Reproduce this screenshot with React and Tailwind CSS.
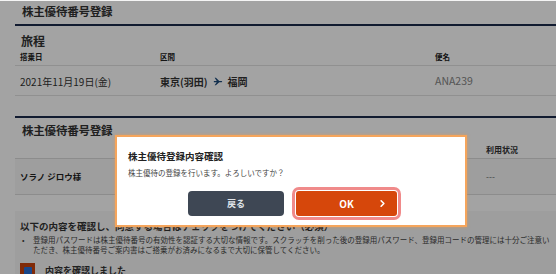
import { ChevronRight } from 'lucide-react'

const font = { fontFamily: '"Noto Sans CJK JP", "Noto Sans", sans-serif' }

const App = () => {
  return (
    <div className="w-[556px] h-[274px] overflow-hidden bg-white border-t border-[#f4f4f4]" style={font}>
      <div className="relative w-full h-full overflow-hidden bg-white text-[#333]">
        {/* page */}
        <div className="h-[23px] flex items-start pt-[3px] pl-[22px]">
          <h1 className="text-[11.5px] font-bold leading-[14px] tracking-[-0.2px]">株主優待番号登録</h1>
        </div>
        <div className="ml-[15px] h-[2px] bg-[#1c2b4c]" />

        <div className="ml-[15px]">
          <h2 className="pl-[6px] pt-[8px] text-[12px] font-bold leading-[14px]">旅程</h2>
          <div className="flex items-center h-[18px] pl-[5px] text-[7.5px] font-bold text-[#222] border-b border-[#e2e2e2]">
            <span className="w-[140px]">搭乗日</span>
            <span className="w-[275px]">区間</span>
            <span>便名</span>
          </div>
          <div className="flex items-center h-[30px] pl-[5px] pt-[1px] text-[10px] border-b border-[#e2e2e2]">
            <span className="w-[140px]">2021年11月19日(金)</span>
            <span className="w-[275px] flex items-center gap-[5px] font-bold">
              東京(羽田)
              <svg width="10" height="9" viewBox="0 0 24 20" fill="#1c4a7a">
                <path d="M2 8.5h7L4 1h3l8 7.5h5.5a1.5 1.5 0 0 1 0 3H15L7 19H4l5-7.5H2z" />
              </svg>
              福岡
            </span>
            <span className="text-[#858585] text-[10.5px]">ANA239</span>
          </div>
        </div>

        <div className="ml-[15px] mt-[20px] h-[2px] bg-[#1c2b4c]" />
        <h2 className="pl-[22px] pt-[5px] text-[11.5px] font-bold leading-[14px] tracking-[-0.2px]">株主優待番号登録</h2>

        <div className="ml-[15px] mt-[5px]">
          <div className="flex items-center justify-end h-[17px] border-b border-[#dcdcdc] text-[8px] font-bold">
            <span className="w-[70px]">利用状況</span>
          </div>
          <div className="flex items-center justify-between h-[36px] bg-[#f7f7f7] border-b border-[#dcdcdc] pl-[5px] text-[8.5px]">
            <span className="font-bold text-[#222]">ソラノ ジロウ様</span>
            <span className="w-[70px] text-[#666]">---</span>
          </div>
        </div>

        <div className="ml-[15px] mt-[16px] bg-[#f7f7f7] pt-[9px] pl-[5px]">
          <p className="text-[9.5px] font-bold leading-[12px] whitespace-nowrap">
            以下の内容を確認し、同意する場合はチェックをつけてください（必須）
          </p>
          <div className="flex mt-[3px] text-[7.5px] leading-[9.5px] text-[#444] whitespace-nowrap">
            <span className="w-[13px] pl-[2px]">•</span>
            <p>
              登録用パスワードは株主優待番号の有効性を認証する大切な情報です。スクラッチを削った後の登録用パスワード、登録用コードの管理には十分ご注意い
              <br />
              ただき、株主優待番号ご案内書はご搭乗がお済みになるまで大切に保管してください。
            </p>
          </div>
          <div className="flex items-center gap-[10px] mt-[9px]">
            <div className="w-[15px] h-[15px] bg-[#c9430e] flex items-center justify-center">
              <div className="w-[8px] h-[8px] bg-[#2a6fd8] rounded-[1px]" />
            </div>
            <span className="text-[9px] font-bold">内容を確認しました</span>
          </div>
        </div>

        {/* overlay */}
        <div className="absolute inset-0 bg-[rgba(0,0,0,0.36)]" />

        {/* dialog */}
        <div className="absolute left-[115px] top-[134px] w-[352px] h-[92px] bg-white border-2 border-[#f5a55c] shadow-[0_0_3px_rgba(245,150,60,0.6)]">
          <p className="pl-[11px] pt-[13px] text-[9.5px] font-bold leading-[12px] text-[#222]">株主優待登録内容確認</p>
          <p className="pl-[11px] mt-[6px] text-[7.5px] leading-[10px] text-[#444]">株主優待の登録を行います。よろしいですか？</p>
          <div className="flex items-center mt-[13px] pl-[71px] gap-[12px]">
            <button className="w-[96px] h-[25px] rounded-[4px] bg-[#3e4754] text-[#dfe3e8] text-[9px] font-bold">
              戻る
            </button>
            <button className="relative w-[101px] h-[25px] rounded-[3px] bg-[#d6470b] text-white text-[10px] font-bold ring-[3px] ring-[#f08a8a] ring-offset-1 ring-offset-white flex items-center justify-center">
              OK
              <ChevronRight className="absolute right-[9px] top-[7px]" size={11} strokeWidth={3.5} />
            </button>
          </div>
        </div>
      </div>
    </div>
  )
}

export default App
